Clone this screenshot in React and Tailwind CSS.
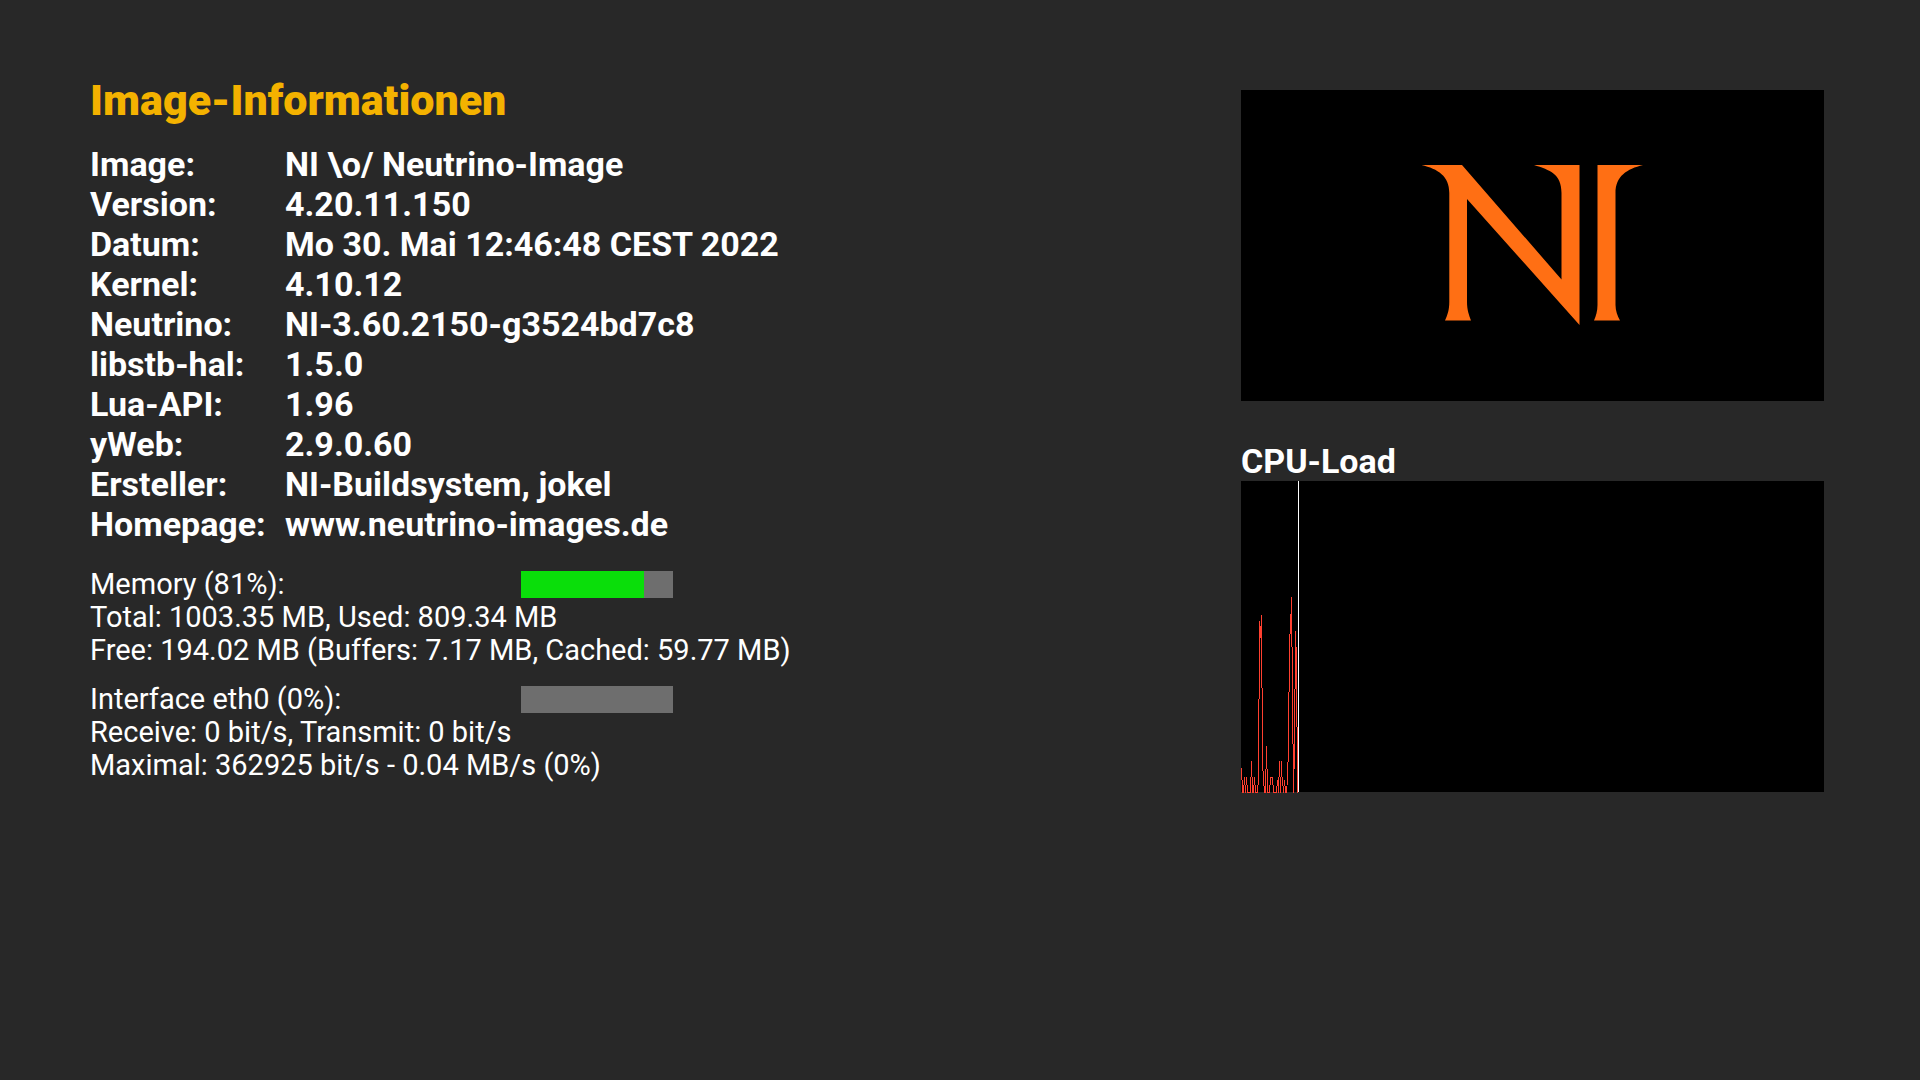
import React from "react";

const imageInfo = [
    ["Image:", "NI \\o/ Neutrino-Image"],
    ["Version:", "4.20.11.150"],
    ["Datum:", "Mo 30. Mai 12:46:48 CEST 2022"],
    ["Kernel:", "4.10.12"],
    ["Neutrino:", "NI-3.60.2150-g3524bd7c8"],
    ["libstb-hal:", "1.5.0"],
    ["Lua-API:", "1.96"],
    ["yWeb:", "2.9.0.60"],
    ["Ersteller:", "NI-Buildsystem, jokel"],
    ["Homepage:", "www.neutrino-images.de"],
];

// one entry per pixel column: [x, top, bottom]
const loadColumns = [
    [0, 287, 299], [1, 299, 312], [2, 304, 312], [3, 296, 304], [4, 304, 312], [5, 296, 304],
    [6, 304, 312], [7, 311, 312], [8, 311, 312], [9, 296, 312], [10, 280, 296], [11, 296, 312],
    [12, 304, 312], [13, 296, 304], [14, 304, 312], [15, 311, 312], [16, 304, 312],
    [17, 218, 304], [18, 140, 218], [19, 145, 157], [20, 134, 207], [21, 207, 290],
    [22, 290, 305], [23, 305, 312], [24, 288, 312], [25, 265, 288], [26, 288, 312],
    [27, 311, 312], [28, 304, 312], [29, 296, 304], [30, 296, 297], [31, 296, 304],
    [32, 304, 312], [33, 311, 312], [34, 311, 312], [35, 305, 312], [36, 299, 305],
    [37, 296, 312], [38, 280, 296], [39, 296, 312], [40, 280, 296], [41, 296, 305],
    [42, 305, 312], [43, 299, 305], [44, 305, 312], [45, 305, 312], [46, 281, 304],
    [47, 211, 281], [48, 153, 211], [49, 133, 153], [50, 116, 166], [51, 166, 263],
    [52, 263, 312], [53, 208, 288], [54, 150, 208], [55, 166, 246], [56, 246, 312],
];

function Meter({ label, percent }) {
    return (
        <div
            role="meter"
            aria-label={label}
            aria-valuenow={percent}
            aria-valuemin={0}
            aria-valuemax={100}
            className="w-[152px] h-[27px] bg-[#6e6e6e]"
        >
            <div className="h-full bg-[#0ade0a]" style={{ width: `${percent}%` }} />
        </div>
    );
}

function StatusBlock({ title, percent, lines }) {
    return (
        <section className="text-[29px] leading-[33px]">
            <div className="flex items-center">
                <h2 className="w-[431px]">{title}</h2>
                <Meter label={title} percent={percent} />
            </div>
            {lines.map((line) => (
                <p key={line}>{line}</p>
            ))}
        </section>
    );
}

function Logo() {
    return (
        <svg viewBox="0 0 583 311" className="w-full h-full" role="img" aria-label="NI">
            <g fill="#ff6f14" transform="translate(159 50)">
                <path d="M21.500 25H62L161.500 139.500V53C161.500 34 150 30 134 25H179.500V185L67 59V162C67 170 69 175 71 180.500H45C47.500 175 49.300 170 49.300 162V53C49.300 36 38 29 21.500 25Z" />
                <path d="M197.500 25H243C227 29 215.500 36 215.500 53V165C215.500 171 217.500 176 220 180.500H194C196 176 197.500 171 197.500 165Z" />
            </g>
        </svg>
    );
}

function CpuChart() {
    return (
        <svg
            viewBox="0 0 583 311"
            className="w-full h-full overflow-visible"
            shapeRendering="crispEdges"
            role="img"
            aria-label="CPU-Load"
        >
            {loadColumns.map(([x, top, bottom]) => (
                <rect key={x} x={x} y={top} width="1" height={bottom - top} fill="#ff4030" />
            ))}
            <rect x="57" y="0" width="1" height="311" fill="#ffffff" />
        </svg>
    );
}

export default function App() {
    return (
        <div className="min-h-screen bg-[#282828] text-white font-['Roboto',sans-serif] pl-[90px] pr-24 py-[74px] flex flex-wrap justify-between">
            <main>
                <h1 className="text-[43px] leading-[52px] font-black text-[#f4b200]">
                    Image-Informationen
                </h1>
                <table className="mt-[18px] text-[34px] leading-10 font-bold">
                    <tbody>
                        {imageInfo.map(([name, value]) => (
                            <tr key={name}>
                                <th scope="row" className="w-[195px] p-0 text-left">
                                    {name}
                                </th>
                                <td className="p-0">{value}</td>
                            </tr>
                        ))}
                    </tbody>
                </table>
                <div className="mt-6 space-y-4">
                    <StatusBlock
                        title="Memory (81%):"
                        percent={81}
                        lines={[
                            "Total: 1003.35 MB, Used: 809.34 MB",
                            "Free: 194.02 MB (Buffers: 7.17 MB, Cached: 59.77 MB)",
                        ]}
                    />
                    <StatusBlock
                        title="Interface eth0 (0%):"
                        percent={0}
                        lines={[
                            "Receive: 0 bit/s, Transmit: 0 bit/s",
                            "Maximal: 362925 bit/s - 0.04 MB/s (0%)",
                        ]}
                    />
                </div>
            </main>
            <aside className="w-[583px] max-w-full pt-4">
                <div className="h-[311px] bg-black">
                    <Logo />
                </div>
                <h2 className="mt-10 text-[34px] leading-10 font-bold">CPU-Load</h2>
                <div className="h-[311px] bg-black">
                    <CpuChart />
                </div>
            </aside>
        </div>
    );
}
